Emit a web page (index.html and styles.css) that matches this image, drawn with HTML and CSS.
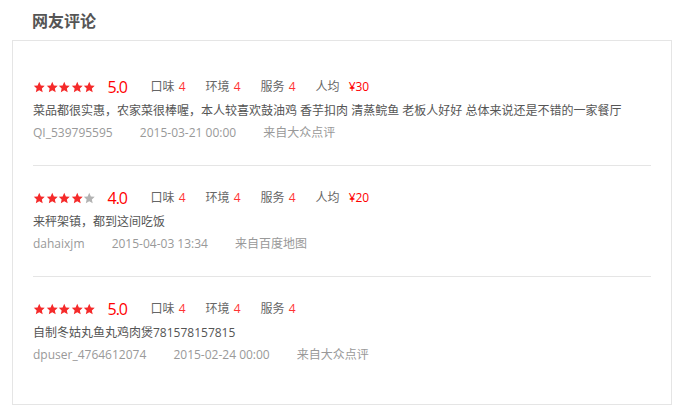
FILE: index.html
```html
<!DOCTYPE html>
<html lang="zh-CN">
<head>
  <meta charset="UTF-8">
  <meta name="viewport" content="width=device-width, initial-scale=1.0">
  <title>网友评论</title>
  <link rel="stylesheet" href="styles.css">
</head>
<body>
  <div class="comments">
    <h2 class="comments-title">网友评论</h2>
    <div class="comments-box">

      <div class="comment">
        <div class="rating">
          <span class="stars">
            <svg viewBox="0 0 24 24"><path d="M12 1.5l3.1 6.9 7.4.8-5.5 5 1.6 7.3L12 17.8l-6.6 3.7 1.6-7.3-5.5-5 7.4-.8z"/></svg>
            <svg viewBox="0 0 24 24"><path d="M12 1.5l3.1 6.9 7.4.8-5.5 5 1.6 7.3L12 17.8l-6.6 3.7 1.6-7.3-5.5-5 7.4-.8z"/></svg>
            <svg viewBox="0 0 24 24"><path d="M12 1.5l3.1 6.9 7.4.8-5.5 5 1.6 7.3L12 17.8l-6.6 3.7 1.6-7.3-5.5-5 7.4-.8z"/></svg>
            <svg viewBox="0 0 24 24"><path d="M12 1.5l3.1 6.9 7.4.8-5.5 5 1.6 7.3L12 17.8l-6.6 3.7 1.6-7.3-5.5-5 7.4-.8z"/></svg>
            <svg viewBox="0 0 24 24"><path d="M12 1.5l3.1 6.9 7.4.8-5.5 5 1.6 7.3L12 17.8l-6.6 3.7 1.6-7.3-5.5-5 7.4-.8z"/></svg>
          </span>
          <span class="score">5.0</span>
          <span class="item">口味 <em>4</em></span>
          <span class="item">环境 <em>4</em></span>
          <span class="item">服务 <em>4</em></span>
          <span class="item">人均 <em class="price">¥30</em></span>
        </div>
        <p class="comment-text">菜品都很实惠，农家菜很棒喔，本人较喜欢鼓油鸡 香芋扣肉 清蒸鲩鱼 老板人好好 总体来说还是不错的一家餐厅</p>
        <div class="meta">
          <span>QI_539795595</span>
          <span>2015-03-21 00:00</span>
          <span>来自大众点评</span>
        </div>
      </div>

      <div class="comment">
        <div class="rating">
          <span class="stars">
            <svg viewBox="0 0 24 24"><path d="M12 1.5l3.1 6.9 7.4.8-5.5 5 1.6 7.3L12 17.8l-6.6 3.7 1.6-7.3-5.5-5 7.4-.8z"/></svg>
            <svg viewBox="0 0 24 24"><path d="M12 1.5l3.1 6.9 7.4.8-5.5 5 1.6 7.3L12 17.8l-6.6 3.7 1.6-7.3-5.5-5 7.4-.8z"/></svg>
            <svg viewBox="0 0 24 24"><path d="M12 1.5l3.1 6.9 7.4.8-5.5 5 1.6 7.3L12 17.8l-6.6 3.7 1.6-7.3-5.5-5 7.4-.8z"/></svg>
            <svg viewBox="0 0 24 24"><path d="M12 1.5l3.1 6.9 7.4.8-5.5 5 1.6 7.3L12 17.8l-6.6 3.7 1.6-7.3-5.5-5 7.4-.8z"/></svg>
            <svg class="off" viewBox="0 0 24 24"><path d="M12 1.5l3.1 6.9 7.4.8-5.5 5 1.6 7.3L12 17.8l-6.6 3.7 1.6-7.3-5.5-5 7.4-.8z"/></svg>
          </span>
          <span class="score">4.0</span>
          <span class="item">口味 <em>4</em></span>
          <span class="item">环境 <em>4</em></span>
          <span class="item">服务 <em>4</em></span>
          <span class="item">人均 <em class="price">¥20</em></span>
        </div>
        <p class="comment-text">来秤架镇，都到这间吃饭</p>
        <div class="meta">
          <span>dahaixjm</span>
          <span>2015-04-03 13:34</span>
          <span>来自百度地图</span>
        </div>
      </div>

      <div class="comment">
        <div class="rating">
          <span class="stars">
            <svg viewBox="0 0 24 24"><path d="M12 1.5l3.1 6.9 7.4.8-5.5 5 1.6 7.3L12 17.8l-6.6 3.7 1.6-7.3-5.5-5 7.4-.8z"/></svg>
            <svg viewBox="0 0 24 24"><path d="M12 1.5l3.1 6.9 7.4.8-5.5 5 1.6 7.3L12 17.8l-6.6 3.7 1.6-7.3-5.5-5 7.4-.8z"/></svg>
            <svg viewBox="0 0 24 24"><path d="M12 1.5l3.1 6.9 7.4.8-5.5 5 1.6 7.3L12 17.8l-6.6 3.7 1.6-7.3-5.5-5 7.4-.8z"/></svg>
            <svg viewBox="0 0 24 24"><path d="M12 1.5l3.1 6.9 7.4.8-5.5 5 1.6 7.3L12 17.8l-6.6 3.7 1.6-7.3-5.5-5 7.4-.8z"/></svg>
            <svg viewBox="0 0 24 24"><path d="M12 1.5l3.1 6.9 7.4.8-5.5 5 1.6 7.3L12 17.8l-6.6 3.7 1.6-7.3-5.5-5 7.4-.8z"/></svg>
          </span>
          <span class="score">5.0</span>
          <span class="item">口味 <em>4</em></span>
          <span class="item">环境 <em>4</em></span>
          <span class="item">服务 <em>4</em></span>
        </div>
        <p class="comment-text">自制冬姑丸鱼丸鸡肉煲781578157815</p>
        <div class="meta">
          <span>dpuser_4764612074</span>
          <span>2015-02-24 00:00</span>
          <span>来自大众点评</span>
        </div>
      </div>

    </div>
  </div>
</body>
</html>
```

FILE: styles.css
```css
body {
  margin: 0;
  padding: 0;
  background-color: #fff;
  font-family: "Open Sans", "Noto Sans CJK SC", sans-serif;
  font-size: 12px;
  color: #555;
}
.comments {
  padding: 0 0 0 12px;
}
.comments-title {
  margin: 0;
  padding-left: 20px;
  height: 40px;
  line-height: 40px;
  font-size: 16px;
  font-weight: bold;
  color: #555;
  font-family: "Noto Sans CJK SC", sans-serif;
}
.comments-box {
  width: 618px;
  border: 1px solid #e5e5e5;
  padding: 14px 20px 17px;
}
.comment {
  padding: 22px 0;
  border-bottom: 1px solid #e5e5e5;
}
.comment:last-child {
  border-bottom: none;
}
.rating {
  display: flex;
  align-items: center;
  height: 20px;
}
.stars {
  display: flex;
  flex-shrink: 0;
}
.stars svg {
  width: 12.5px;
  height: 12.5px;
  fill: #f52a2a;
}
.stars svg.off {
  fill: #b3b3b3;
}
.score {
  flex-shrink: 0;
  margin-left: 12px;
  width: 43px;
  font-size: 16px;
  letter-spacing: -1px;
  color: #f00;
  line-height: 20px;
}
.item {
  margin-right: 20px;
  color: #666;
  line-height: 20px;
}
.item em {
  font-style: normal;
  margin-left: 1px;
  color: #f33;
}
.item em.price {
  margin-left: 6px;
  color: #f00;
}
.comment-text {
  margin: 4px 0 0;
  line-height: 20px;
  color: #555;
}
.meta {
  margin-top: 2px;
  line-height: 20px;
  color: #999;
}
.meta span {
  margin-right: 24px;
}
```
